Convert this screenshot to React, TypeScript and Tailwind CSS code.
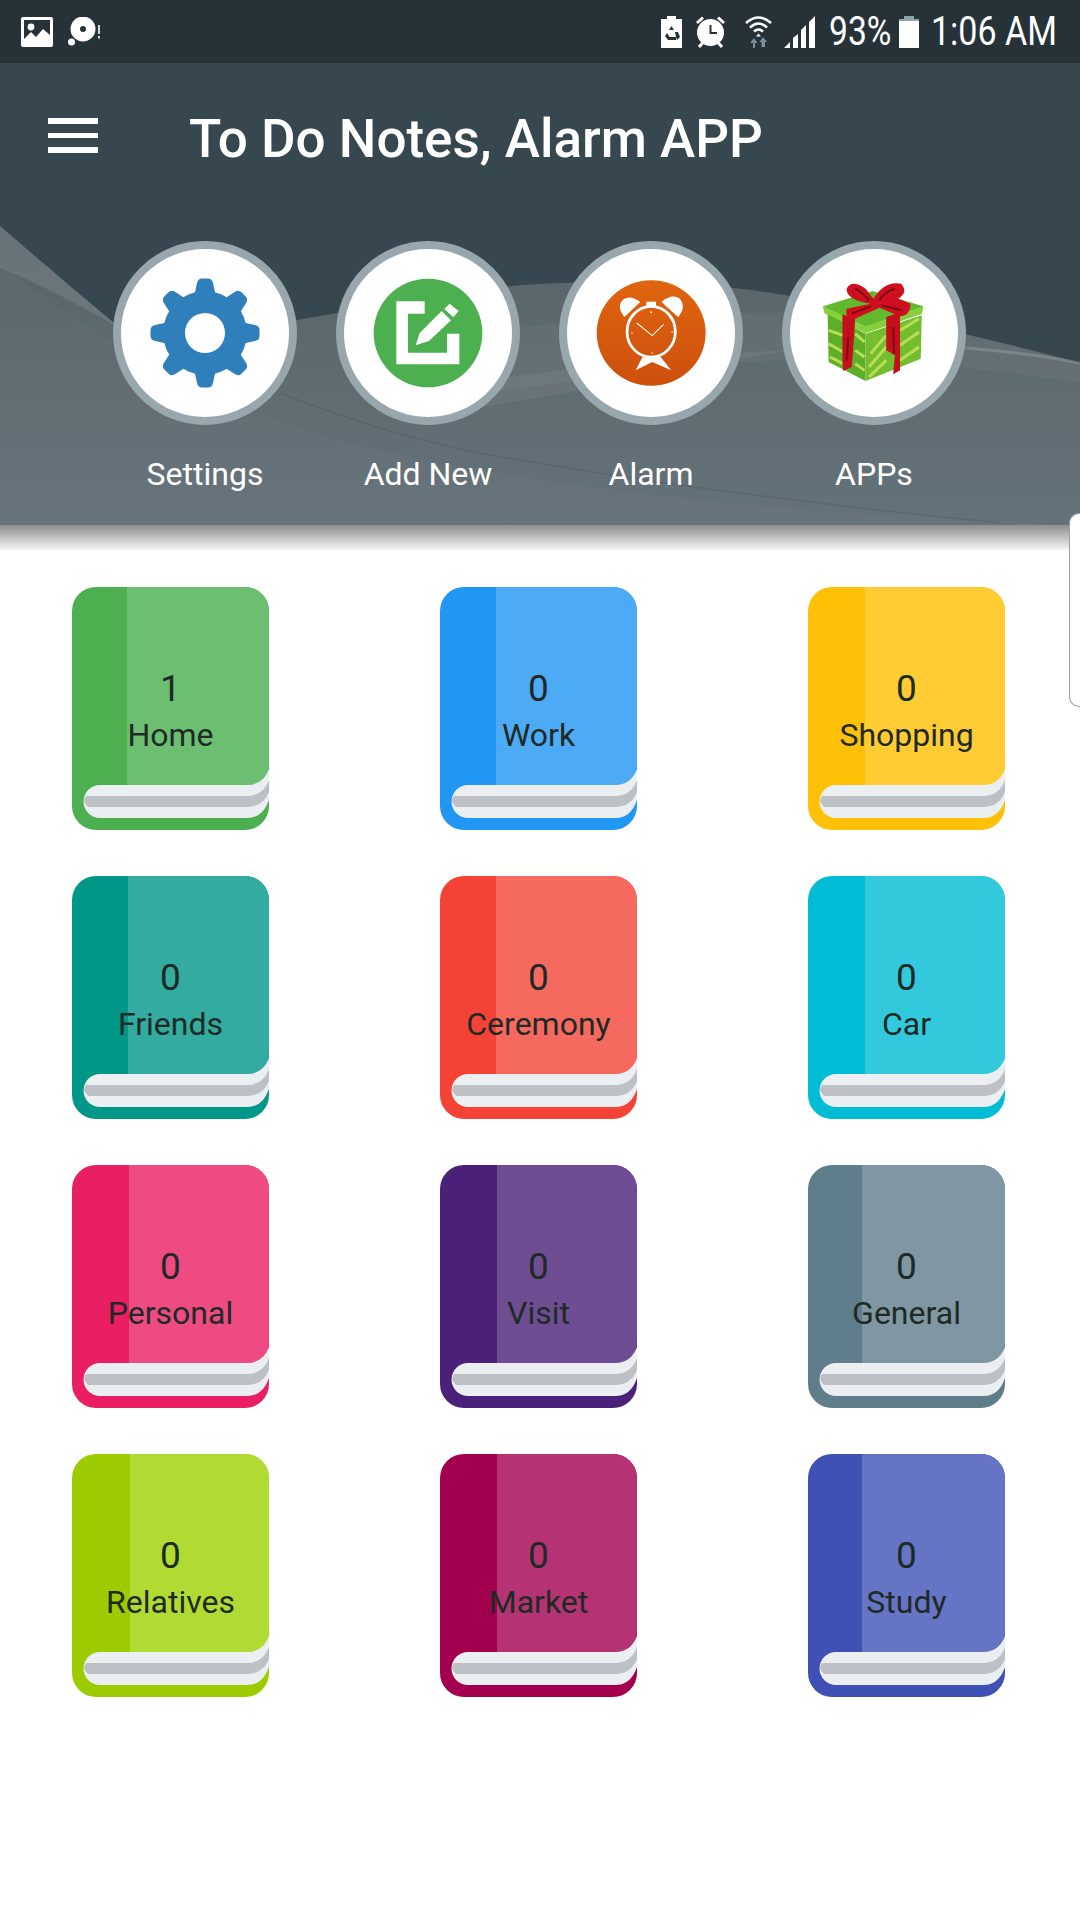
const font = { fontFamily: "Roboto, sans-serif" };

const books = [
  { count: 1, name: "Home", dark: "#4caf50", light: "#6cbf70", spine: 55 },
  { count: 0, name: "Work", dark: "#2196f3", light: "#4dabf5", spine: 56 },
  { count: 0, name: "Shopping", dark: "#ffc107", light: "#ffcd33", spine: 57 },
  { count: 0, name: "Friends", dark: "#009688", light: "#33aba0", spine: 56 },
  { count: 0, name: "Ceremony", dark: "#f44336", light: "#f6695e", spine: 56 },
  { count: 0, name: "Car", dark: "#00bcd4", light: "#33c9dd", spine: 57 },
  { count: 0, name: "Personal", dark: "#e91e63", light: "#ed4b82", spine: 57 },
  { count: 0, name: "Visit", dark: "#4a2078", light: "#6e4d93", spine: 57 },
  { count: 0, name: "General", dark: "#607d8b", light: "#7f97a2", spine: 54 },
  { count: 0, name: "Relatives", dark: "#9ccc00", light: "#b0db33", spine: 58 },
  { count: 0, name: "Market", dark: "#a2004f", light: "#b53372", spine: 57 },
  { count: 0, name: "Study", dark: "#3f51b5", light: "#6574c4", spine: 54 },
];

function StatusLeft() {
  return (
    <div className="flex items-center gap-[15px]">
      <svg width="32" height="30" viewBox="0 0 32 30">
        <rect width="32" height="30" rx="2" fill="#fff" />
        <rect x="3" y="3" width="26" height="24" fill="#263238" />
        <circle cx="10" cy="10" r="3.4" fill="#fff" />
        <path d="M3 27V22L10 15L15 20L22 12L29 18V27Z" fill="#fff" />
      </svg>
      <svg width="33" height="30" viewBox="0 0 33 30">
        <circle cx="15" cy="12" r="12.5" fill="#fff" />
        <circle cx="15" cy="12" r="3" fill="#263238" />
        <circle cx="3.5" cy="25" r="3.5" fill="#fff" />
        <rect x="30" y="8" width="2" height="9" fill="#cfd8dc" />
        <rect x="30" y="19" width="2" height="2.5" fill="#cfd8dc" />
      </svg>
    </div>
  );
}

function StatusRight() {
  return (
    <div className="flex items-center">
      <svg width="21" height="32" viewBox="0 0 21 32">
        <path d="M6 0H15V3H21V32H0V3H6Z" fill="#fff" />
        <path d="M10.5 10L13 14H8ZM6 17L8.5 21H15V24H7L4 20ZM14 16L17 16L19 21L16 24L15 21Z" fill="#263238" />
      </svg>
      <svg className="ml-[13px]" width="31" height="32" viewBox="0 0 31 32">
        <circle cx="15.5" cy="16.5" r="13.500" fill="#fff" />
        <path d="M15.5 9V17H22" fill="none" stroke="#263238" strokeWidth="2" />
        <path d="M2 7L8 1.5M29 7L23 1.5M4 31L7.5 27M27 31L23.5 27" stroke="#fff" strokeWidth="3" />
      </svg>
      <svg className="ml-[19px]" width="27" height="33" viewBox="0 0 27 33">
        <path d="M1 8Q13.5 -3 26 8M5 12.500Q13.500 4.500 22 12.500M9 16.500Q13.500 12.500 18 16.500" fill="none" stroke="#fff" strokeWidth="2.600" />
        <path d="M13.500 18.500L16 21.500H11Z" fill="#fff" />
        <path d="M8 33V28H5L9 23L9 23L12.500 28H10V33Z" fill="#78909c" />
        <path d="M18 22L22 27H20V32H16.500V27H14.500Z" fill="#78909c" />
      </svg>
      <svg className="ml-[12px]" width="31" height="32" viewBox="0 0 31 32">
        <path d="M0 32L6 26V32ZM9 32V22L14 18V32ZM17 32V14L22 9V32ZM25 32V6L31 0V32Z" fill="#fff" />
      </svg>
      <span className="ml-[14px] inline-block w-[60px] whitespace-nowrap text-[40px] leading-[40px] text-white origin-left scale-x-[0.84]">
        93%
      </span>
      <svg className="ml-[10px]" width="20" height="32" viewBox="0 0 20 32">
        <rect x="5" y="0" width="10" height="3" fill="#90a4ae" />
        <rect x="0" y="3" width="20" height="3" fill="#90a4ae" />
        <rect x="0" y="5" width="20" height="27" fill="#fff" />
      </svg>
      <span className="ml-[12px] inline-block w-[124px] whitespace-nowrap text-[40px] leading-[40px] text-white origin-left scale-x-[0.85]">
        1:06 AM
      </span>
    </div>
  );
}

function HeaderWaves() {
  return (
    <svg className="absolute inset-0" width="1080" height="462" viewBox="0 0 1080 462">
      <defs>
        <linearGradient id="wave" x1="0" y1="0" x2="0" y2="1">
          <stop offset="0" stopColor="#566369" />
          <stop offset="0.55" stopColor="#5f6c72" />
          <stop offset="1" stopColor="#64727a" />
        </linearGradient>
      </defs>
      <path d="M0 163Q60 215 120 265L297 257L337 250Q440 225 560 220Q700 215 800 235Q950 265 1080 300V462H0Z" fill="url(#wave)" />
      <path d="M0 163Q60 215 120 265Q50 225 0 205Z" fill="#fff" opacity="0.1" />
      <path d="M0 200Q130 310 330 375Q600 445 1080 462H0Z" fill="#fff" opacity="0.02" />
      <path d="M400 285Q560 250 780 250Q950 260 1080 300V320Q900 290 720 300Q560 320 400 340Z" fill="#fff" opacity="0.04" />
      <path d="M475 320Q620 295 790 287L720 300Q600 325 475 345Z" fill="#fff" opacity="0.06" />
      <path d="M280 330Q420 385 540 400Q707 430 1000 460" fill="none" stroke="#37474f" strokeWidth="1.500" opacity="0.2" />
      <path d="M965 285Q1030 290 1080 300" fill="none" stroke="#fff" strokeWidth="3" opacity="0.15" />
    </svg>
  );
}

function GearIcon() {
  const angles = [0, 45, 90, 135, 180, 225, 270, 315];
  return (
    <svg width="110" height="110" viewBox="-55 -55 110 110">
      <circle r="42" fill="#2f7fba" />
      {angles.map((a) => (
        <path
          key={a}
          transform={`rotate(${a})`}
          d="M-11 -36L-8 -50Q-7 -54.500 -3 -54.500H3Q7 -54.500 8 -50L11 -36Z"
          fill="#2f7fba"
        />
      ))}
      <circle r="20" fill="#fff" />
    </svg>
  );
}

function AddIcon() {
  return (
    <svg width="110" height="110" viewBox="850 173 330 330">
      <circle cx="1015" cy="338" r="163" fill="#4caf50" />
      <path d="M920 243H1005V280H955V397H1072V340H1109V432H920Z" fill="#fff" />
      <path d="M978 375L990 338L1056 272L1084 300L1018 362Z" fill="#fff" />
      <path d="M1064 266L1080 250L1107 272L1091 291Z" fill="#fff" />
    </svg>
  );
}

function AlarmIcon() {
  return (
    <svg width="110" height="110" viewBox="162 173 319 330" preserveAspectRatio="none">
      <defs>
        <linearGradient id="alarm" x1="0" y1="0" x2="0" y2="1">
          <stop offset="0" stopColor="#e0650f" />
          <stop offset="1" stopColor="#cc4f0c" />
        </linearGradient>
      </defs>
      <circle cx="322" cy="338" r="158" fill="url(#alarm)" />
      <path d="M245 290Q220 260 240 238Q262 222 290 245Z" fill="#fff" />
      <path d="M400 290Q425 260 405 235Q382 218 352 245Z" fill="#fff" />
      <rect x="308" y="244" width="28" height="14" fill="#fff" />
      <ellipse cx="322" cy="334" rx="70" ry="76" fill="none" stroke="#fff" strokeWidth="8" />
      <path d="M280 308L325 346L358 312" fill="none" stroke="#fff" strokeWidth="3" />
      <path d="M277 450L298 408Q322 418 348 408L380 450L325 425Z" fill="#fff" />
      <circle cx="322" cy="276" r="3" fill="#fff" />
      <circle cx="266" cy="339" r="3" fill="#f0b080" />
      <circle cx="383" cy="335" r="3" fill="#f0b080" />
      <circle cx="325" cy="398" r="3" fill="#f0b080" />
    </svg>
  );
}

function GiftIcon() {
  return (
    <svg width="110" height="110" viewBox="810 173 319 330" preserveAspectRatio="none">
      <path d="M835 280L945 340V482L838 425Z" fill="#5dae28" />
      <path d="M945 340L1108 285L1105 415L945 482Z" fill="#74bd2f" />
      <path d="M838 330L880 345M838 370L880 395M842 410L880 430M915 340L942 365M915 390L942 410M915 430L942 450M955 440L1005 380M955 470L1005 420M960 400L1005 345M1045 330L1100 295M1045 375L1100 335M1045 420L1100 380" stroke="#b9dd55" strokeWidth="9" fill="none" />
      <path d="M822 258L965 212L1112 258L1108 280L945 338L826 278Z" fill="#62b82f" />
      <path d="M822 258L945 318L1112 258L1108 280L945 338L826 278Z" fill="#86cf3d" />
      <path d="M878 282L915 296L905 440L880 452L878 425Z" fill="#c4101c" />
      <path d="M1005 290L1045 276L1045 450L1025 462L1030 405L1005 390Z" fill="#c4101c" />
      <path d="M960 250Q890 240 890 205Q905 175 945 205L968 235Q1000 180 1048 190Q1070 215 1040 235L1075 250Q1075 285 1045 288L985 262L905 300Q885 290 890 265Z" fill="#cf0f1e" />
      <path d="M915 205Q935 215 955 240M1030 205Q1000 215 985 240M905 280L960 258M1050 270L990 255M895 350L890 420M1025 320L1028 400" stroke="#7d0a12" strokeWidth="6" fill="none" />
    </svg>
  );
}

const actions = [
  { label: "Settings", icon: <GearIcon /> },
  { label: "Add New", icon: <AddIcon /> },
  { label: "Alarm", icon: <AlarmIcon /> },
  { label: "APPs", icon: <GiftIcon /> },
];

function Book({ book }: { book: (typeof books)[number] }) {
  return (
    <div className="relative h-[243px] w-[197px]">
      <svg className="absolute inset-0" width="197" height="243" viewBox="0 0 197 243">
        <rect width="197" height="243" rx="24" fill={book.dark} />
        <path d={`M${book.spine} 0H173a24 24 0 0 1 24 24V176q0 22 -22 22H${book.spine}Z`} fill={book.light} />
        <path d="M28 198H175Q191 198 197 182V213Q191 231 175 231H28a16.500 16.500 0 0 1 0 -33Z" fill="#eceff1" />
        <path d="M14 209H175Q191 209 197 193V205Q191 220 175 220H16Q12 216 12 213Z" fill="#bdc1c6" />
      </svg>
      <div className="relative flex flex-col items-center pt-[79px] text-[#1e2a26]">
        <span className="text-[37px] leading-[46px]">{book.count}</span>
        <span className="text-[32px] leading-[46px] whitespace-nowrap">{book.name}</span>
      </div>
    </div>
  );
}

export default function App() {
  return (
    <div className="relative h-[1920px] w-[1080px] overflow-hidden bg-white" style={font}>
      <div className="flex h-[63px] items-center justify-between bg-[#263238] pl-[21px] pr-[25px]">
        <StatusLeft />
        <StatusRight />
      </div>

      <div className="relative h-[462px] bg-[#37474f]">
        <HeaderWaves />
        <div className="relative flex h-[150px] items-center">
          <div className="mb-[5px] ml-[48px] flex w-[50px] flex-col gap-[9px]">
            <div className="h-[6px] bg-white" />
            <div className="h-[5px] bg-white" />
            <div className="h-[6px] bg-white" />
          </div>
          <h1 className="ml-[91px] whitespace-nowrap pt-[2px] text-[53px] font-medium leading-none text-white">
            To Do Notes, Alarm APP
          </h1>
        </div>
        <div className="relative mt-[28px] flex gap-[39px] pl-[113px]">
          {actions.map((a) => (
            <div key={a.label} className="flex w-[184px] flex-col items-center">
              <div className="flex h-[184px] w-[184px] items-center justify-center rounded-full border-[8px] border-[#98a7ae] bg-white">
                {a.icon}
              </div>
              <span className="mt-[29px] text-[32px] leading-[40px] text-white">{a.label}</span>
            </div>
          ))}
        </div>
      </div>

      <div className="h-[25px] bg-gradient-to-b from-[#8f8f8f] to-[#f6f6f6]" />

      <div className="grid grid-cols-[197px_197px_197px] justify-between gap-y-[46px] pl-[72px] pr-[75px] pt-[37px]">
        {books.map((b) => (
          <Book key={b.name} book={b} />
        ))}
      </div>

      <div className="absolute right-0 top-[513px] h-[194px] w-[11px] rounded-l-[10px] border border-r-0 border-[#9e9e9e] bg-white" />
    </div>
  );
}
